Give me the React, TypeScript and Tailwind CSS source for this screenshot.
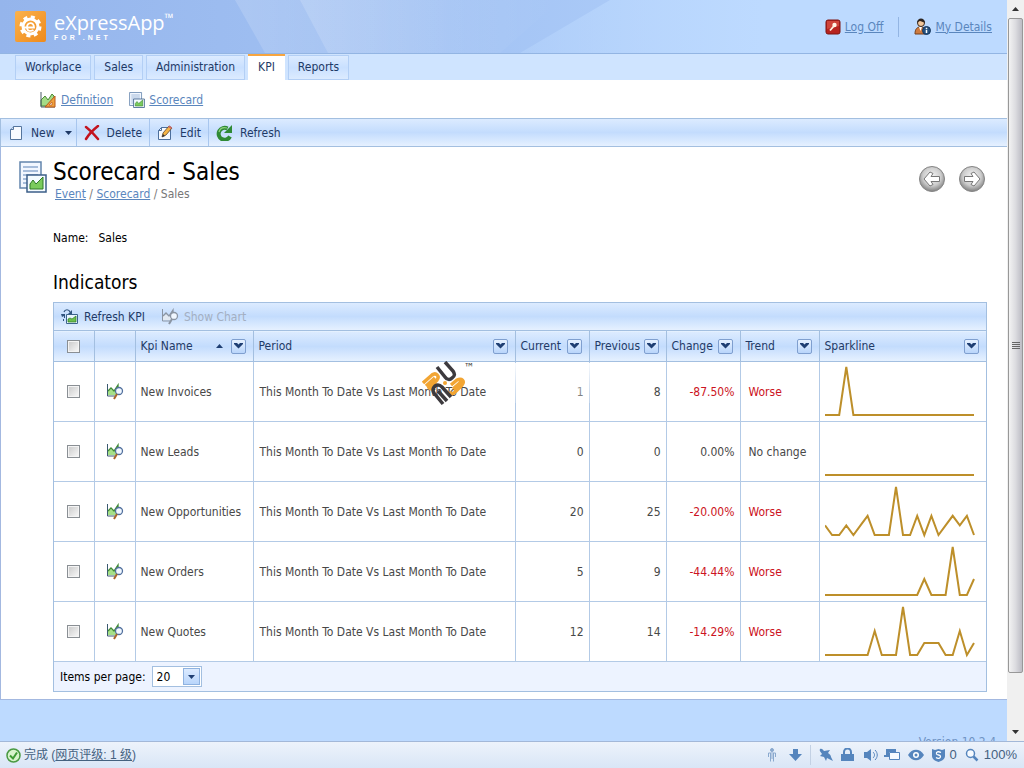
import type { ReactNode } from 'react'

type Indicator = {
  name: string
  current: number
  previous: number
  change: string
  trend: string
  series: number[]
}

const PERIOD = 'This Month To Date Vs Last Month To Date'

const indicators: Indicator[] = [
  { name: 'New Invoices', current: 1, previous: 8, change: '-87.50%', trend: 'Worse', series: [0, 0, 0, 1, 0, 0, 0, 0, 0, 0, 0, 0, 0, 0, 0, 0, 0, 0, 0, 0, 0, 0] },
  { name: 'New Leads', current: 0, previous: 0, change: '0.00%', trend: 'No change', series: [0, 0, 0, 0, 0, 0, 0, 0, 0, 0, 0, 0, 0, 0, 0, 0, 0, 0, 0, 0, 0, 0] },
  { name: 'New Opportunities', current: 20, previous: 25, change: '-20.00%', trend: 'Worse', series: [1, 0, 0, 1, 0, 1, 2, 0, 0, 0, 5, 0, 0, 2, 0, 2, 0, 1, 2, 1, 2, 0] },
  { name: 'New Orders', current: 5, previous: 9, change: '-44.44%', trend: 'Worse', series: [0, 0, 0, 0, 0, 0, 0, 0, 0, 0, 0, 0, 0, 0, 1, 0, 0, 0, 3, 0, 0, 1] },
  { name: 'New Quotes', current: 12, previous: 14, change: '-14.29%', trend: 'Worse', series: [0, 0, 0, 0, 0, 0, 0, 2, 0, 0, 0, 4, 0, 0, 1, 1, 1, 0, 0, 2, 0, 1] },
]

const tabs = ['Workplace', 'Sales', 'Administration', 'KPI', 'Reports']

const columns = [
  { title: 'Kpi Name', sorted: true },
  { title: 'Period' },
  { title: 'Current' },
  { title: 'Previous' },
  { title: 'Change' },
  { title: 'Trend' },
  { title: 'Sparkline' },
]

const bar = 'bg-linear-to-b from-[#dcebff] from-0% via-[#c3dcfd] via-50% to-[#e6f1ff] to-100%'

/* ---------- icons ---------- */

function LogoIcon() {
  return (
    <svg width="31" height="31" viewBox="0 0 31 31">
      <defs>
        <linearGradient id="logo" x1="0" y1="0" x2="1" y2="1">
          <stop offset="0" stopColor="#fbb24c" />
          <stop offset="1" stopColor="#ee8a1c" />
        </linearGradient>
      </defs>
      <rect width="31" height="31" rx="2" fill="url(#logo)" />
      <circle cx="15.500" cy="15.500" r="9.500" fill="none" stroke="#fff" strokeWidth="3" strokeDasharray="4 3.46" />
      <circle cx="15.500" cy="15.500" r="7.500" fill="none" stroke="#fff" strokeWidth="3" />
      <path d="M9 16.500h10c0-6-7-5.500-7 0 0 4 4 4 6.500 2.500" fill="none" stroke="#fff" strokeWidth="1.800" />
    </svg>
  )
}

function DefinitionIcon() {
  return (
    <svg width="16" height="16" viewBox="0 0 16 16">
      <path d="M1 14V8l4-4 3 4 4-6 2 2v10z" fill="#a5dc86" stroke="#4a8a36" />
      <path d="M1 0v15h14" fill="none" stroke="#4a5a66" />
      <path d="M15 4v11H5z" fill="#f0a03c" stroke="#b8581c" />
      <path d="M12 10v3H9z" fill="#fff" stroke="#b8581c" strokeWidth=".7" />
    </svg>
  )
}

function ScorecardIcon({ width = 16, height = 16 }: { width?: number; height?: number }) {
  return (
    <svg width={width} height={height} viewBox="0 0 28 32" preserveAspectRatio="none">
      <path d="M1 1h21v26H1z" fill="#f2f7ff" stroke="#6385ad" strokeWidth="1.500" />
      <path d="M4 6h15M4 10h15M4 14h15M4 18h4M4 22h4" stroke="#8fabcf" strokeWidth="1.500" />
      <path d="M8 14h19v17H8z" fill="#f4fbff" stroke="#3c5f89" strokeWidth="1.500" />
      <path d="M11 28v-5l3-4 3 4 7-7v12z" fill="#7acb5c" stroke="#2f7a27" />
    </svg>
  )
}

function NewIcon() {
  return (
    <svg width="16" height="16" viewBox="0 0 16 16">
      <path d="M5.500 1.500h8v13h-11v-10z" fill="#f8fbff" stroke="#55759d" />
      <path d="M5.500 1.500v3h-3" fill="#cfe0f5" stroke="#55759d" />
    </svg>
  )
}

function DeleteIcon() {
  return (
    <svg width="16" height="16" viewBox="0 0 16 16">
      <path d="M2 2c4 3 8 7 12 12M14 1C9 5 5 9 2 14" fill="none" stroke="#c3141f" strokeWidth="2.500" strokeLinecap="round" />
    </svg>
  )
}

function EditIcon() {
  return (
    <svg width="16" height="16" viewBox="0 0 16 16">
      <path d="M4.500 2.500h9v12h-12v-9z" fill="#f6faff" stroke="#4c6f9c" />
      <path d="M4.500 2.500v3h-3" fill="none" stroke="#4c6f9c" />
      <path d="M5 12l1-4 6-7 3 2-6 7z" fill="#f5b445" stroke="#5c4630" strokeWidth=".8" />
      <path d="M5 12l1-3 2 2z" fill="#333" />
      <path d="M11 2l3 2 1-1.500L12.500.5z" fill="#c96a6a" />
    </svg>
  )
}

function RefreshIcon() {
  return (
    <svg width="17" height="16" viewBox="0 0 17 16">
      <path d="M14 11.500A6 6 0 1 1 11.500 3.500" fill="none" stroke="#2f8a35" strokeWidth="4" />
      <path d="M16 0v8H8z" fill="#2f8a35" />
      <path d="M3 7c1-4 4-5 8-4" fill="none" stroke="#8fd27b" strokeWidth="1.200" />
    </svg>
  )
}

function RefreshKpiIcon() {
  return (
    <svg width="17" height="16" viewBox="0 0 17 16">
      <path d="M5.500 5.500h11v9h-11z" fill="#eaf6ff" stroke="#3c648c" />
      <path d="M7 13v-3l2-1 2 1 4-3v6z" fill="#6cc04c" stroke="#2f7a27" strokeWidth=".7" />
      <path d="M3 3c1-3 5-3 6 0" fill="none" stroke="#31547e" strokeWidth="1.200" />
      <path d="M11 1v4H7zM0 5h4v4H3V7L1 8zM2 10h1v2H2z" fill="#31547e" />
    </svg>
  )
}

function ChartLensIcon({ muted = false }: { muted?: boolean }) {
  return (
    <svg width="18" height="18" viewBox="0 0 18 18">
      <path d="M2 12V8l3-2 3 2 4-5v9z" fill={muted ? '#e2e9f2' : '#a5e088'} />
      <path d="M1.500 1v12H9" fill="none" stroke={muted ? '#8b95a3' : '#3a5870'} />
      <path d="M2 8l3-3 3 3 4-6v5" fill="none" stroke={muted ? '#8b95a3' : '#3f8a35'} strokeWidth="1.300" />
      <circle cx="13" cy="8" r="3.500" fill="#f0f7ff" stroke={muted ? '#8b95a3' : '#53719e'} strokeWidth="1.300" />
      <path d="M11 11l-3 5" stroke={muted ? '#8b95a3' : '#a9642a'} strokeWidth="2" />
    </svg>
  )
}

function LogOffIcon() {
  return (
    <svg width="16" height="16" viewBox="0 0 16 16">
      <rect x="1" y="1" width="14" height="14" rx="2" fill="#b8231f" stroke="#7d1512" />
      <path d="M2 2h12v5L2 10z" fill="#dd5a4d" opacity=".6" />
      <circle cx="9.500" cy="6" r="2.200" fill="#fff4e4" />
      <path d="M8.500 7.500L5 11.500" stroke="#fff4e4" strokeWidth="1.800" />
    </svg>
  )
}

function UserIcon() {
  return (
    <svg width="17" height="17" viewBox="0 0 17 17">
      <path d="M1 16c0-5 2-7 5.500-7s5 2 5 7z" fill="#cf7b3f" stroke="#74401e" />
      <path d="M5 9l1.500 4L8 9z" fill="#fff" />
      <circle cx="7" cy="5" r="3.500" fill="#f3c79b" stroke="#3a2a20" />
      <path d="M3 5c0-6 8-6 8 0-2-1-4-2-5-2-1 0-2 1-3 2z" fill="#2c2420" />
      <circle cx="12.500" cy="12.500" r="4" fill="#24507f" stroke="#16365c" />
      <path d="M12.500 9.800v1.400M12.500 12v3" stroke="#fff" strokeWidth="1.500" />
    </svg>
  )
}

function RoundArrow({ flip = false }: { flip?: boolean }) {
  return (
    <svg width="28" height="28" viewBox="0 0 28 28">
      <defs>
        <radialGradient id={flip ? 'orbR' : 'orbL'} cx=".5" cy=".4" r=".6">
          <stop offset="0" stopColor="#f4f4f4" />
          <stop offset=".6" stopColor="#cdcdcd" />
          <stop offset="1" stopColor="#808080" />
        </radialGradient>
      </defs>
      <circle cx="14" cy="14" r="12.500" fill={flip ? 'url(#orbR)' : 'url(#orbL)'} stroke="#858585" />
      <path
        d={flip ? 'M22 14l-6-7-3 1.500 2 3H6.500v5H15l-2 3 3 1.500z' : 'M6 14l6-7 3 1.500-2 3h8.500v5H13l2 3-3 1.500z'}
        fill="#fff"
        stroke="#777"
        strokeLinejoin="round"
      />
    </svg>
  )
}

function FilterButton({ label }: { label: string }) {
  return (
    <button aria-label={label} className="flex h-[15px] w-[15px] shrink-0 items-center justify-center rounded-xs border border-[#7f9fcf] bg-linear-to-b from-[#e6f1ff] to-[#b9d5fb]">
      <svg width="9" height="6" viewBox="0 0 9 6">
        <path d="M0 0h3l1.500 1.500L6 0h3v1L4.500 5.500 0 1z" fill="#1f3f73" />
      </svg>
    </button>
  )
}

function Watermark() {
  return (
    <div className="pointer-events-none absolute top-[58px] left-[368px] flex">
      <svg width="46" height="46" viewBox="0 0 46 46" fill="none" strokeWidth="3.500">
        <g stroke="#f2a533">
          <path d="M1 22L10 14c4-3 8 1 5 5L6 28M4 25l9-8M8 29l7-6" />
          <path d="M29 24l6-5c5-2 8 1 5 5l-8 8c-2 1-4 0-5-1M31 28l9-8" />
        </g>
        <circle cx="23" cy="22" r="2" fill="#f2a533" />
        <g stroke="#3d3a3e">
          <path d="M15 6l8 10c2 3 5 3 7 1 3-2 3-4 1-7L23 1" />
          <path d="M21 43L12 32c-2-3-1-5 1-7 3-2 5-1 7 1l9 10M25 40L16 30" />
        </g>
      </svg>
      <span className="-ml-1 pt-px text-[12px] leading-3 text-[#444]">™</span>
      <span className="mt-[2px] ml-10 h-10 w-20 bg-linear-to-b from-white/90 via-white/50 to-white/20" />
    </div>
  )
}

function Sparkline({ series }: { series: number[] }) {
  const max = Math.max(...series, 1)
  const points = series.map((v, i) => `${((i * 149) / 21).toFixed(1)},${53 - (v / max) * 48}`).join(' ')
  return (
    <svg width="150" height="59" viewBox="0 0 150 59">
      <polyline points={points} fill="none" stroke="#bd8f2a" strokeWidth="2" />
    </svg>
  )
}

/* ---------- page parts ---------- */

function ToolButton({ icon, children, className = '' }: { icon: ReactNode; children: ReactNode; className?: string }) {
  return (
    <button className={`flex items-center gap-[7px] border-r border-[#a8c6ee] px-[7px] text-[#1f3a66] ${className}`}>
      {icon}
      {children}
    </button>
  )
}

function GridCheckbox({ label }: { label: string }) {
  return (
    <input
      type="checkbox"
      aria-label={label}
      className="mx-auto block h-[13px] w-[13px] appearance-none border border-[#8a8f94] bg-linear-to-br from-[#c9c9c9] to-[#fafafa] shadow-[inset_0_0_0_1px_#f4f4f4]"
    />
  )
}

function Header() {
  return (
    <header className="relative flex h-[54px] shrink-0 items-center justify-between border-b border-[#93b5e3] bg-linear-to-r from-[#95b5ec] via-[#a5c5f5] to-[#bddaff]">
      <svg className="absolute inset-0 h-full w-full" viewBox="0 0 1007 53" preserveAspectRatio="none">
        <defs>
          <linearGradient id="beamA">
            <stop offset="0" stopColor="#fff" stopOpacity=".16" />
            <stop offset="1" stopColor="#fff" stopOpacity="0" />
          </linearGradient>
          <linearGradient id="beamB">
            <stop offset="0" stopColor="#bddaff" stopOpacity=".35" />
            <stop offset=".5" stopColor="#bddaff" stopOpacity="1" />
          </linearGradient>
        </defs>
        <path d="M235 0h220v53H265z" fill="url(#beamA)" />
        <path d="M300 0h260l-60 53H328z" fill="url(#beamA)" />
        <path d="M610 0h397v53H520z" fill="url(#beamB)" />
      </svg>
      <div className="relative flex items-center gap-2 pl-[15px]">
        <LogoIcon />
        <div className="font-['Open_Sans',sans-serif] text-white">
          <div className="flex text-[20px] leading-[22px] font-medium">
            eXpressApp<sup className="top-0 text-[12px] leading-3">™</sup>
          </div>
          <div className="font-['Liberation_Sans',sans-serif] text-[7px] leading-2 font-bold tracking-[3px]">FOR .NET</div>
        </div>
      </div>
      <div className="relative flex items-center pr-[15px] text-[#5a86bd]">
        <a href="#logoff" className="flex items-center gap-1">
          <LogOffIcon />
          <span className="underline">Log Off</span>
        </a>
        <span className="mx-[15px] h-5 border-l border-[#93b5e3]" />
        <a href="#details" className="flex items-center gap-1">
          <UserIcon />
          <span className="underline">My Details</span>
        </a>
      </div>
    </header>
  )
}

function IndicatorGrid() {
  return (
    <div className="relative border border-[#a3bfe0]">
      <div className={`flex h-[27px] items-center gap-4 px-[7px] text-[#1f3a66] ${bar}`}>
        <button className="flex items-center gap-[6px]">
          <RefreshKpiIcon />
          Refresh KPI
        </button>
        <button disabled className="flex items-center gap-[5px] text-[#a3afc2]">
          <ChartLensIcon muted />
          Show Chart
        </button>
      </div>
      <table className="w-full table-fixed border-collapse text-[#484848]">
        <colgroup>
          <col className="w-[40px]" />
          <col className="w-[41px]" />
          <col className="w-[118px]" />
          <col />
          <col className="w-[74px]" />
          <col className="w-[77px]" />
          <col className="w-[74px]" />
          <col className="w-[79px]" />
          <col className="w-[167px]" />
        </colgroup>
        <thead>
          <tr className={`h-[31px] border-y border-[#a3bfe0] text-[#1f3a66] ${bar}`}>
            <th className="border-r border-[#a3bfe0]">
              <GridCheckbox label="Select all" />
            </th>
            <th className="border-r border-[#a3bfe0]" />
            {columns.map((c) => (
              <th key={c.title} className="border-r border-[#a3bfe0] pr-[7px] pl-[5px] font-normal last:border-r-0">
                <div className="flex items-center">
                  <span className="grow text-left">{c.title}</span>
                  {c.sorted && (
                    <svg width="7" height="4" viewBox="0 0 7 4" className="mr-2">
                      <path d="M0 4l3.500-4L7 4z" fill="#1f3f73" />
                    </svg>
                  )}
                  <FilterButton label={`Filter ${c.title}`} />
                </div>
              </th>
            ))}
          </tr>
        </thead>
        <tbody>
          {indicators.map((row) => {
            const tone = row.trend === 'Worse' ? 'text-[#cc1322]' : ''
            return (
              <tr key={row.name} className="h-[60px] border-b border-[#b3cae6] *:border-r *:border-[#b3cae6] *:p-0 *:last:border-r-0">
                <td>
                  <GridCheckbox label={`Select ${row.name}`} />
                </td>
                <td>
                  <button aria-label={`Open chart for ${row.name}`} className="mx-auto block">
                    <ChartLensIcon />
                  </button>
                </td>
                <td>
                  <div className="pl-[5px] whitespace-nowrap">{row.name}</div>
                </td>
                <td>
                  <div className="pl-[6px] whitespace-nowrap">{PERIOD}</div>
                </td>
                <td>
                  <div className="pr-[5px] text-right">{row.current}</div>
                </td>
                <td>
                  <div className="pr-[5px] text-right">{row.previous}</div>
                </td>
                <td>
                  <div className={`pr-[5px] text-right ${tone}`}>{row.change}</div>
                </td>
                <td>
                  <div className={`pl-2 whitespace-nowrap ${tone}`}>{row.trend}</div>
                </td>
                <td>
                  <div className="pl-[5px]">
                    <Sparkline series={row.series} />
                  </div>
                </td>
              </tr>
            )
          })}
        </tbody>
      </table>
      <div className="flex h-[29px] items-center gap-[6px] bg-[#edf3ff] pl-[6px] text-black">
        <label htmlFor="page-size">Items per page:</label>
        <div className="relative">
          <select id="page-size" defaultValue="20" className="block h-[21px] w-[50px] appearance-none border border-[#a3bfe0] bg-white pl-1">
            <option>10</option>
            <option>20</option>
            <option>50</option>
          </select>
          <span className="pointer-events-none absolute top-[2px] right-[2px] flex h-[17px] w-[17px] items-center justify-center border border-[#8fb2e0] bg-linear-to-b from-[#dcebff] to-[#b9d5fb]">
            <svg width="7" height="4" viewBox="0 0 7 4">
              <path d="M0 0h7L3.500 4z" fill="#1f3f73" />
            </svg>
          </span>
        </div>
      </div>
      <Watermark />
    </div>
  )
}

function Scrollbar() {
  return (
    <div className="flex w-[17px] shrink-0 flex-col items-center bg-[#f0f0f0]">
      <div className="flex h-[18px] items-center">
        <svg width="7" height="4" viewBox="0 0 7 4">
          <path d="M0 4l3.500-4L7 4z" fill="#333" />
        </svg>
      </div>
      <div className="flex w-[15px] grow flex-col items-center justify-center gap-px rounded-xs border border-[#989898] bg-linear-to-r from-[#f3f3f3] via-[#dcdce0] to-[#bcbcc4]">
        {[0, 1, 2, 3].map((i) => (
          <span key={i} className="h-px w-2 bg-[#666]" />
        ))}
      </div>
      <div className="flex h-[68px] items-end pb-[7px]">
        <svg width="7" height="4" viewBox="0 0 7 4">
          <path d="M0 0h7L3.500 4z" fill="#333" />
        </svg>
      </div>
    </div>
  )
}

function StatusBar() {
  return (
    <footer className="flex h-[27px] shrink-0 items-center justify-between border-t border-[#a3b8d8] bg-linear-to-b from-[#edf3fb] to-[#d9e6f6] pr-[7px] pl-[6px] font-['Liberation_Sans','Noto_Sans_CJK_SC',sans-serif] text-[#44617f]">
      <div className="flex items-center gap-[3px] text-[12px]">
        <svg width="15" height="15" viewBox="0 0 15 15" fill="none">
          <circle cx="7.500" cy="7.500" r="6.500" fill="#d8f3cc" stroke="#4a9a42" strokeWidth="1.500" />
          <path d="M4 7.500l3 3 4-6" stroke="#3f9a35" strokeWidth="2" />
        </svg>
        <span>
          完成 (<a href="#rating" className="underline">网页评级: 1 级</a>)
        </span>
      </div>
      <div className="flex items-center text-[13px] text-[#44617f]">
        <svg width="10" height="14" viewBox="0 0 10 14" className="mr-3" fill="none" stroke="#8aa9ce">
          <circle cx="5" cy="2" r="1.500" fill="#8aa9ce" />
          <path d="M1.500 9V5h7v4M3.500 5v8.500M6.500 5v8.500M5 6v5" />
        </svg>
        <svg width="13" height="14" viewBox="0 0 13 14" fill="#5585bd">
          <path d="M4 1h5v5h4l-6.500 7L0 6h4z" />
        </svg>
        <span className="mx-2 h-5 border-l border-[#c3d1e4]" />
        <svg width="14" height="14" viewBox="0 0 14 14" className="mr-2" fill="#5585bd">
          <path d="M1 1c2-1 3 1 4 2l6-1-2 3c2 1 3 3 3 4l2 4-4-2-2-1-1 3-2-4-4-1 2-2C2 4 0 3 1 1z" />
        </svg>
        <svg width="13" height="14" viewBox="0 0 13 14" className="mr-[10px]">
          <path d="M3 7V4a3.500 3.500 0 0 1 7 0v3" fill="none" stroke="#5585bd" strokeWidth="2" />
          <path d="M0 6h13v7H0z" fill="#5585bd" />
        </svg>
        <svg width="14" height="14" viewBox="0 0 14 14" className="mr-[6px]" fill="#5585bd">
          <path d="M0 4h3l4-3v12l-4-3H0z" />
          <path d="M9 4c2 2 2 4 0 6M11 2c3 3 3 7 0 10" fill="none" stroke="#5585bd" />
        </svg>
        <svg width="16" height="14" viewBox="0 0 16 14" className="mr-2">
          <path d="M2 1h10v3H5v5H0V7h2z" fill="#5585bd" />
          <path d="M5.500 4.500h10v7h-10z" fill="#f7fbff" stroke="#5585bd" />
        </svg>
        <svg width="16" height="12" viewBox="0 0 16 12" className="mr-2">
          <path d="M0 6c4-7 12-7 16 0-4 7-12 7-16 0z" fill="#5585bd" />
          <circle cx="8" cy="6" r="3" fill="#fff" />
          <circle cx="8" cy="6" r="1.500" fill="#5585bd" />
        </svg>
        <svg width="13" height="14" viewBox="0 0 13 14" className="mr-[5px]">
          <path d="M0 1l3 1 3.500-1L10 2l3-1v7c0 3-3 5-6.500 6C3 13 0 11 0 8z" fill="#5585bd" />
          <path d="M9 4.500C6 3 4 4 4.500 6c1 1.500 4 .5 4 2.500S6 11 4 9.500" fill="none" stroke="#fff" strokeWidth="1.300" />
        </svg>
        0
        <svg width="14" height="14" viewBox="0 0 14 14" className="mr-[5px] ml-2" fill="none" stroke="#5585bd">
          <circle cx="5.500" cy="5.500" r="4" fill="#f7fbff" strokeWidth="1.500" />
          <path d="M8.500 8.500l4 4" strokeWidth="2.500" />
        </svg>
        100%
      </div>
    </footer>
  )
}

export default function App() {
  return (
    <div className="flex h-screen flex-col overflow-hidden bg-[#bddaff] font-['DejaVu_Sans_Condensed','DejaVu_Sans',sans-serif] text-[12px] leading-4">
      <div className="flex min-h-0 grow">
        <main className="flex min-w-0 grow flex-col overflow-hidden">
          <Header />

          <nav className="flex h-[26px] shrink-0 gap-[3px] bg-[#cfe4ff] pl-[15px]">
            {tabs.map((tab) => (
              <a
                key={tab}
                href={`#${tab}`}
                className={
                  tab === 'KPI'
                    ? 'flex items-center border-t-2 border-[#f7a540] bg-white px-[10px] pb-[2px] text-[#1f3a66]'
                    : 'mt-px flex items-center border border-[#b3cff5] bg-linear-to-b from-[#dcebff] via-[#c9e0ff] to-[#dcebff] px-[9px] pb-[2px] text-[#1f3a66]'
                }
              >
                {tab}
              </a>
            ))}
          </nav>

          <nav className="flex h-[38px] shrink-0 items-center gap-4 bg-white pt-px pl-10 text-[#5a86bd]">
            <a href="#definition" className="flex items-center gap-[5px]">
              <DefinitionIcon />
              <span className="underline">Definition</span>
            </a>
            <a href="#scorecard" className="flex items-center gap-1">
              <ScorecardIcon />
              <span className="underline">Scorecard</span>
            </a>
          </nav>

          <div className={`flex h-[29px] shrink-0 border-y border-l border-[#a3bfe0] ${bar}`}>
            <ToolButton icon={<NewIcon />} className="pr-1">
              New
              <svg width="7" height="4" viewBox="0 0 7 4" className="ml-[3px]">
                <path d="M0 0h7L3.500 4z" fill="#1f3a66" />
              </svg>
            </ToolButton>
            <ToolButton icon={<DeleteIcon />}>Delete</ToolButton>
            <ToolButton icon={<EditIcon />}>Edit</ToolButton>
            <ToolButton icon={<RefreshIcon />} className="border-r-0">
              Refresh
            </ToolButton>
          </div>

          <section className="shrink-0 border-b border-l border-[#a3b8e0] bg-white pr-5 pb-[7px] pl-[18px]">
            <div className="flex items-start pt-3">
              <div className="w-[34px] pt-[2px]">
                <ScorecardIcon width={28} height={32} />
              </div>
              <div className="grow">
                <h1 className="text-[24px] leading-[27px] text-black">Scorecard - Sales</h1>
                <p className="pl-[2px] text-[#777]">
                  <a href="#event" className="text-[#5a86bd] underline">Event</a>
                  {' / '}
                  <a href="#scorecard" className="text-[#5a86bd] underline">Scorecard</a>
                  {' / Sales'}
                </p>
              </div>
              <div className="flex gap-3 pt-[6px] pr-px">
                <button aria-label="Previous record">
                  <RoundArrow />
                </button>
                <button aria-label="Next record">
                  <RoundArrow flip />
                </button>
              </div>
            </div>
            <div className="pl-[34px] text-black">
              <p className="mt-7 flex gap-[10px]">
                <span>Name:</span>
                <span>Sales</span>
              </p>
              <h2 className="mt-6 mb-2 text-[19px] leading-6">Indicators</h2>
              <IndicatorGrid />
            </div>
          </section>

          <p className="mt-[34px] shrink-0 pr-[11px] text-right text-[#6f93c4]">Version 10.2.4</p>
        </main>
        <Scrollbar />
      </div>
      <StatusBar />
    </div>
  )
}
